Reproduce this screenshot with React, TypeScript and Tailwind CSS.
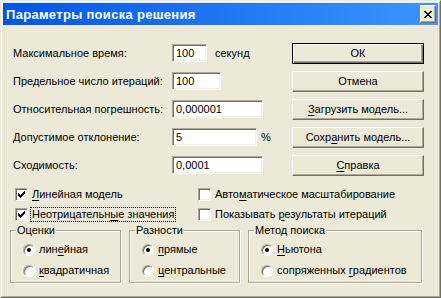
import type { ReactNode } from 'react';

const U = ({ children }: { children: ReactNode }) => (
  <span className="underline underline-offset-[2px] decoration-1">{children}</span>
);

const sunken =
  'bg-white border border-t-[#aca899] border-l-[#aca899] border-r-white border-b-white shadow-[inset_1px_1px_0_#716f64,inset_-1px_-1px_0_#f1efe2]';

const Field = ({ value, className }: { value: string; className: string }) => (
  <div className={`${sunken} ${className} h-[18px] flex items-center pl-[3px] leading-none`}>{value}</div>
);

const Btn = ({ children, def }: { children: ReactNode; def?: boolean }) => (
  <div
    className={
      def
        ? 'h-[21px] w-[132px] flex items-center justify-center bg-[#ece9d8] border border-black shadow-[inset_1px_1px_0_white,inset_-1px_-1px_0_#716f64,inset_-2px_-2px_0_#aca899]'
        : 'h-[21px] w-[132px] flex items-center justify-center bg-[#ece9d8] border border-t-white border-l-white border-r-[#716f64] border-b-[#716f64] shadow-[inset_-1px_-1px_0_#aca899]'
    }
  >
    {children}
  </div>
);

const Check = ({ on, children, focus }: { on?: boolean; children: ReactNode; focus?: boolean }) => (
  <div className="flex items-center gap-[2px] h-[20px]">
    <span className={`${sunken} w-[13px] h-[13px] flex items-center justify-center shrink-0`}>
      {on && (
        <svg width="7" height="7" viewBox="0 0 7 7" shapeRendering="crispEdges">
          <rect x="0" y="2" width="1" height="3" fill="black" />
          <rect x="1" y="3" width="1" height="3" fill="black" />
          <rect x="2" y="4" width="1" height="3" fill="black" />
          <rect x="3" y="3" width="1" height="3" fill="black" />
          <rect x="4" y="2" width="1" height="3" fill="black" />
          <rect x="5" y="1" width="1" height="3" fill="black" />
          <rect x="6" y="0" width="1" height="3" fill="black" />
        </svg>
      )}
    </span>
    <span
      className={`px-px leading-[13px] border ${focus ? 'border-dotted border-black' : 'border-transparent'}`}
    >
      {children}
    </span>
  </div>
);

const Radio = ({ on, children }: { on?: boolean; children: ReactNode }) => (
  <div className="flex items-center gap-[4px] h-[21px]">
    <span className="w-[12px] h-[12px] rounded-full bg-white border border-t-[#aca899] border-l-[#aca899] border-r-white border-b-white shadow-[inset_1px_1px_0_#716f64,inset_-1px_-1px_0_#f1efe2] flex items-center justify-center shrink-0">
      {on && <span className="w-[4px] h-[4px] rounded-full bg-black" />}
    </span>
    <span>{children}</span>
  </div>
);

const Group = ({ title, className, children }: { title: string; className: string; children: ReactNode }) => (
  <div
    className={`${className} flex flex-col border border-[#aca899] shadow-[inset_1px_1px_0_white,1px_1px_0_white] pl-[12px] pb-px`}
  >
    <span className="self-start -mt-[7px] -ml-[7px] px-px bg-[#ece9d8] leading-[13px]">{title}</span>
    <div className="pt-[2px]">{children}</div>
  </div>
);

export default function App() {
  return (
    <div className="w-[441px] h-[298px] font-['Liberation_Sans',Arial,sans-serif] text-[11px] text-black border border-t-[#ece9d8] border-l-[#ece9d8] border-r-[#716f64] border-b-[#716f64]">
      <div className="h-full border border-t-white border-l-white border-r-[#aca899] border-b-[#aca899] bg-[#ece9d8] p-px flex flex-col">
        <div className="h-[22px] bg-linear-to-r from-[#0054e3] to-[#3d95ff] flex items-center justify-between pl-[3px] pr-[2px]">
          <span className="text-white font-bold text-[13px] tracking-[0.3px] leading-none">Параметры поиска решения</span>
          <div className="w-[16px] h-[18px] bg-[#ece9d8] border border-t-white border-l-white border-r-[#716f64] border-b-[#716f64] shadow-[inset_-1px_-1px_0_#aca899] flex items-center justify-center">
            <svg width="8" height="7" viewBox="0 0 8 7" shapeRendering="crispEdges">
              <path d="M0 0h2v1h1v1h2v-1h1v-1h2v1h-1v1h-1v1h-1v1h1v1h1v1h1v1h-2v-1h-1v-1h-2v1h-1v1h-2v-1h1v-1h1v-1h1v-1h-1v-1h-1v-1h-1z" fill="black" />
            </svg>
          </div>
        </div>

        <div className="flex pt-[18px]">
          <div className="w-[289px] pl-[10px] pt-px flex flex-col gap-[10px]">
            <div className="flex items-center h-[18px]">
              <span className="w-[159px]">Максимальное время:</span>
              <Field value="100" className="w-[35px]" />
              <span className="ml-[8px]">секунд</span>
            </div>
            <div className="flex items-center h-[18px]">
              <span className="w-[159px]">Предельное число итераций:</span>
              <Field value="100" className="w-[49px]" />
            </div>
            <div className="flex items-center h-[18px]">
              <span className="w-[159px]">Относительная погрешность:</span>
              <Field value="0,000001" className="w-[91px]" />
            </div>
            <div className="flex items-center h-[18px]">
              <span className="w-[159px]">Допустимое отклонение:</span>
              <Field value="5" className="w-[85px]" />
              <span className="ml-[4px]">%</span>
            </div>
            <div className="flex items-center h-[18px]">
              <span className="w-[159px]">Сходимость:</span>
              <Field value="0,0001" className="w-[91px]" />
            </div>
          </div>
          <div className="flex flex-col gap-[7px]">
            <Btn def>ОК</Btn>
            <Btn>Отмена</Btn>
            <Btn>
              <U>З</U>агрузить модель...
            </Btn>
            <Btn>
              Сохр<U>а</U>нить модель...
            </Btn>
            <Btn>
              <U>С</U>правка
            </Btn>
          </div>
        </div>

        <div className="grid grid-cols-[183px_1fr] pl-[12px] mt-[8px]">
          <Check on>
            <U>Л</U>инейная модель
          </Check>
          <Check>
            Авто<U>м</U>атическое масштабирование
          </Check>
          <Check on focus>
            Неотрицательн<U>ы</U>е значения
          </Check>
          <Check>
            Показывать <U>р</U>езультаты итераций
          </Check>
        </div>

        <div className="flex gap-[8px] pl-[7px] mt-[6px]">
          <Group title="Оценки" className="w-[111px]">
            <Radio on>
              лин<U>е</U>йная
            </Radio>
            <Radio>
              <U>к</U>вадратичная
            </Radio>
          </Group>
          <Group title="Разности" className="w-[111px]">
            <Radio on>
              <U>п</U>рямые
            </Radio>
            <Radio>
              <U>ц</U>ентральные
            </Radio>
          </Group>
          <Group title="Метод поиска" className="w-[174px]">
            <Radio on>
              <U>Н</U>ьютона
            </Radio>
            <Radio>
              сопряженных <U>г</U>радиентов
            </Radio>
          </Group>
        </div>
      </div>
    </div>
  );
}
